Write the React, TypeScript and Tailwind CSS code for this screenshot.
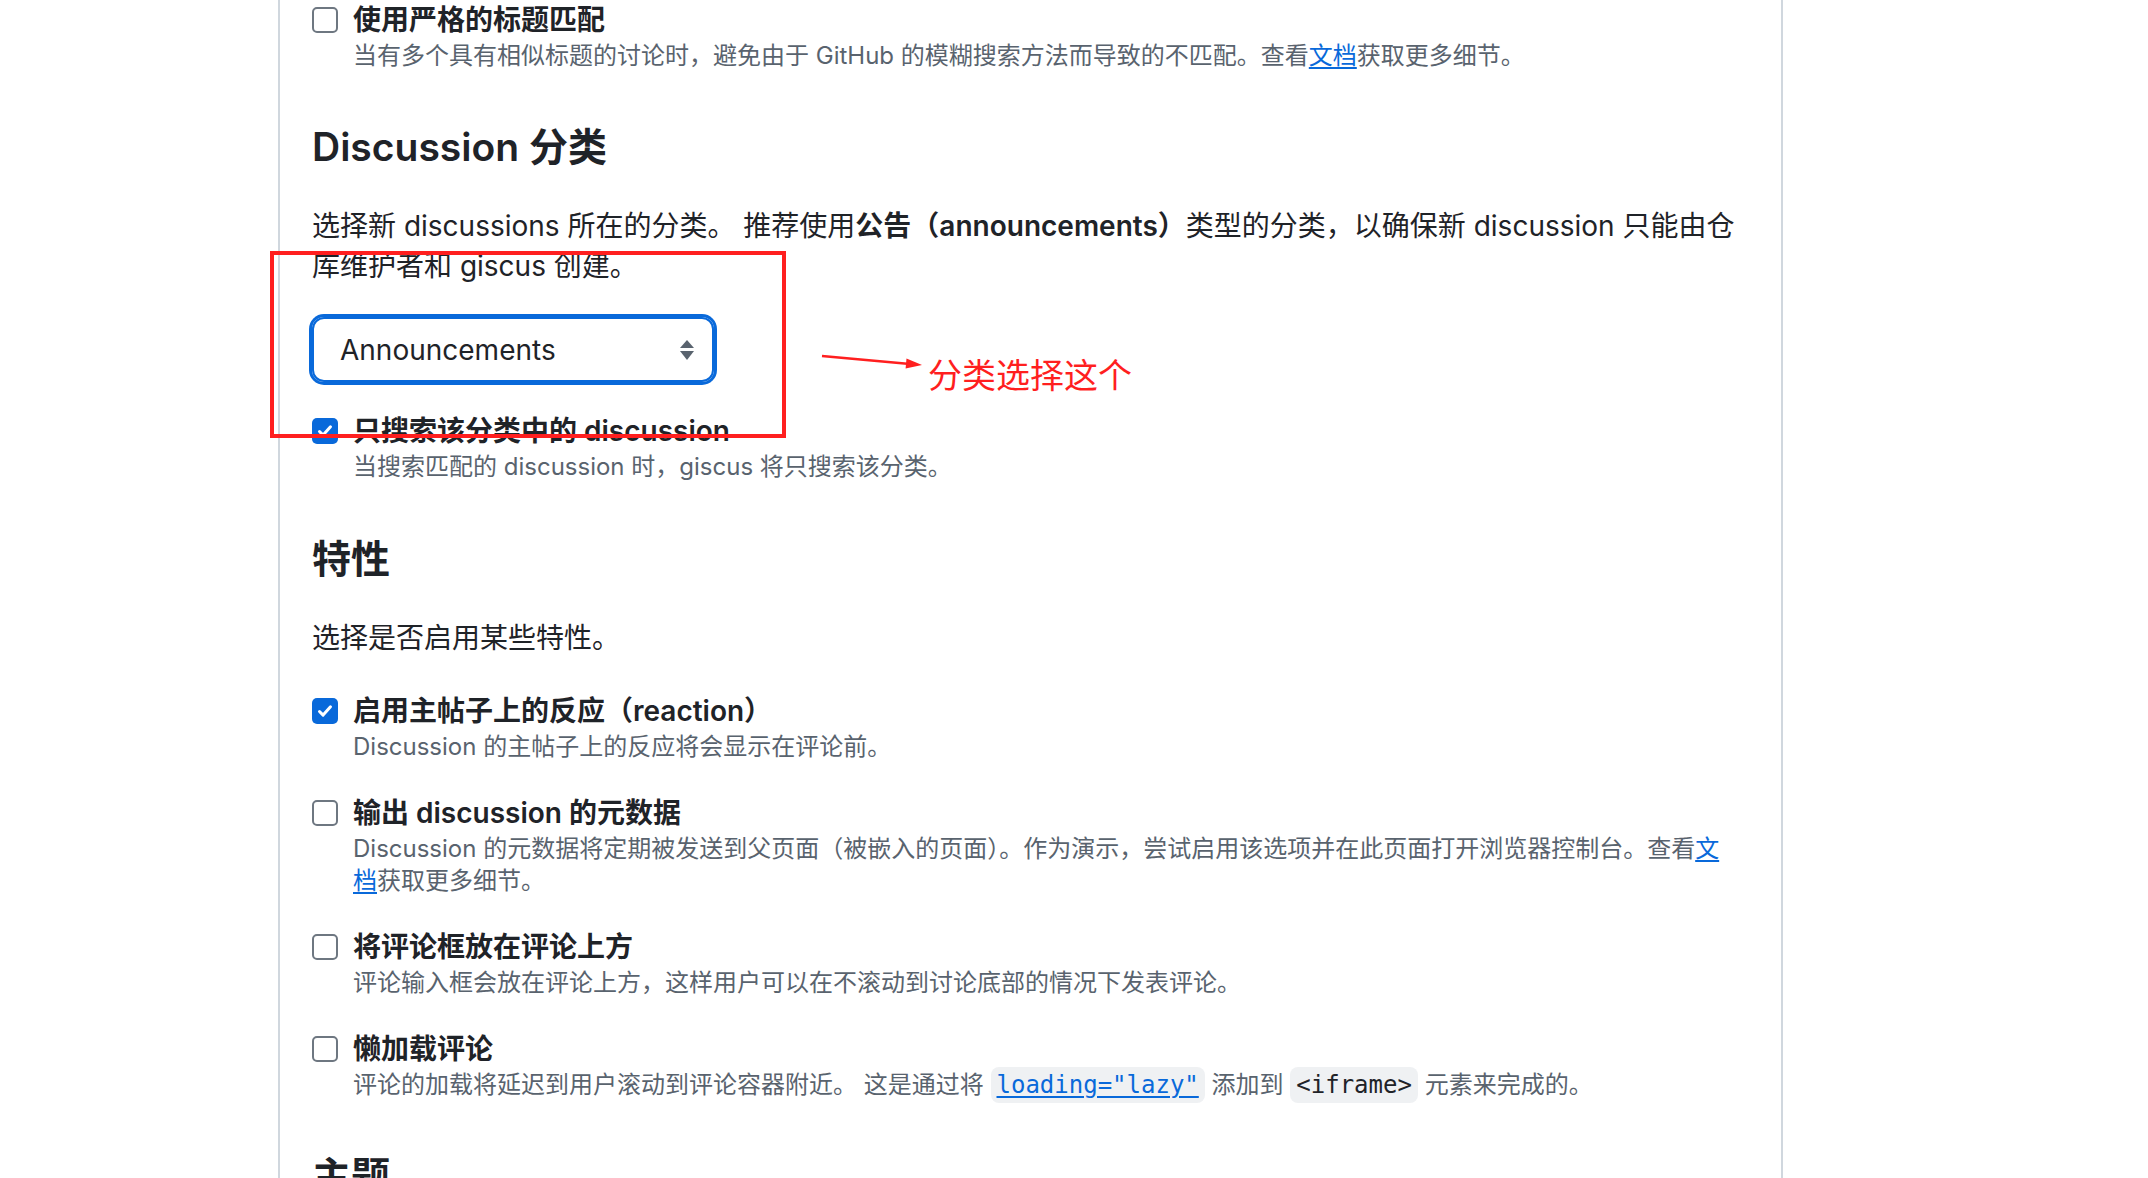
import React from "react";

function Box({ checked }: { checked: boolean }) {
  if (checked) {
    return (
      <div className="mt-[7px] flex h-[26px] w-[26px] shrink-0 items-center justify-center rounded-[5px] bg-[#0969da]">
        <svg width="18" height="18" viewBox="0 0 18 18" fill="none">
          <path d="M3.5 9.5l3.6 3.6L14.5 4.8" stroke="white" strokeWidth="3" strokeLinecap="round" strokeLinejoin="round" />
        </svg>
      </div>
    );
  }
  return <div className="mt-[7px] h-[26px] w-[26px] shrink-0 rounded-[5px] border-2 border-[#6e7781] bg-white" />;
}

function Item({ checked, label, children, className }: { checked: boolean; label: React.ReactNode; children: React.ReactNode; className?: string }) {
  return (
    <div className={"flex gap-[15px] " + (className ?? "")}>
      <Box checked={checked} />
      <div className="min-w-0 flex-1">
        <div className="text-[28px] font-semibold leading-[40px] text-[#1f2328]">{label}</div>
        <div className="text-[24px] leading-[32px] text-[#59636e]">{children}</div>
      </div>
    </div>
  );
}

function Link({ children }: { children: React.ReactNode }) {
  return <a className="text-[#0969da] underline underline-offset-[3px]">{children}</a>;
}

function Code({ children }: { children: React.ReactNode }) {
  return (
    <code className="rounded-[8px] bg-[#eff1f3] px-[6px] py-[4px] font-['DejaVu_Sans_Mono',monospace] text-[24px] text-[#1f2328]">
      {children}
    </code>
  );
}

export default function App() {
  return (
    <div className="relative h-[1178px] w-[2148px] overflow-hidden bg-white font-[Inter,'Noto_Sans_CJK_SC',sans-serif] text-[#1f2328]">
      <div className="ml-[278px] h-full w-[1505px] border-x-2 border-[#d0d7de] px-[32px]">
        <div className="mt-0">
          <Item checked={false} label="使用严格的标题匹配">
            当有多个具有相似标题的讨论时，避免由于 GitHub 的模糊搜索方法而导致的不匹配。查看<Link>文档</Link>获取更多细节。
          </Item>

          <h2 className="mt-[51px] text-[39px] font-semibold leading-[48px]">Discussion 分类</h2>
          <p className="mt-[35px] text-[28px] leading-[40px]">
            选择新 discussions 所在的分类。 推荐使用<strong className="font-semibold">公告（announcements）</strong>类型的分类，以确保新 discussion 只能由仓库维护者和 giscus 创建。
          </p>

          <div className="mt-[31px] flex h-[65px] w-[402px] items-center justify-between rounded-[12px] border-2 border-[#0969da] pl-[26px] pr-[17px] shadow-[0_0_0_3px_#0969da]">
            <span className="text-[28px] leading-none text-[#1f2328]">Announcements</span>
            <svg width="16" height="22" viewBox="0 0 16 22">
              <path d="M8 1L15 9H1z" fill="#59636e" />
              <path d="M8 21L15 12H1z" fill="#59636e" />
            </svg>
          </div>

          <Item checked={true} label="只搜索该分类中的 discussion" className="mt-[29px]">
            当搜索匹配的 discussion 时，giscus 将只搜索该分类。
          </Item>

          <h2 className="mt-[52px] text-[39px] font-semibold leading-[48px]">特性</h2>
          <p className="mt-[35px] text-[28px] leading-[40px]">选择是否启用某些特性。</p>

          <Item checked={true} label="启用主帖子上的反应（reaction）" className="mt-[33px]">
            Discussion 的主帖子上的反应将会显示在评论前。
          </Item>
          <Item checked={false} label="输出 discussion 的元数据" className="mt-[30px]">
            Discussion 的元数据将定期被发送到父页面（被嵌入的页面）。作为演示，尝试启用该选项并在此页面打开浏览器控制台。查看<Link>文<br />档</Link>获取更多细节。
          </Item>
          <Item checked={false} label="将评论框放在评论上方" className="mt-[30px]">
            评论输入框会放在评论上方，这样用户可以在不滚动到讨论底部的情况下发表评论。
          </Item>
          <Item checked={false} label="懒加载评论" className="mt-[30px]">
            评论的加载将延迟到用户滚动到评论容器附近。 这是通过将 <Code><Link>loading="lazy"</Link></Code> 添加到 <Code>&lt;iframe&gt;</Code> 元素来完成的。
          </Item>

          <h2 className="mt-[51px] text-[39px] font-semibold leading-[48px]">主题</h2>
        </div>
      </div>

      <div className="absolute left-[270px] top-[251px] h-[187px] w-[516px] border-[4px] border-[#ff1f1f]" />
      <svg className="absolute left-[815px] top-[345px]" width="120" height="32" viewBox="0 0 120 32">
        <line x1="7" y1="11" x2="95" y2="19" stroke="#ff1f1f" strokeWidth="2.5" />
        <path d="M107 20L91.5 13.6L90.6 23.6z" fill="#ff1f1f" />
      </svg>
      <div className="absolute left-[928px] top-[356px] text-[34px] leading-[40px] text-[#ff1f1f]">分类选择这个</div>
    </div>
  );
}
